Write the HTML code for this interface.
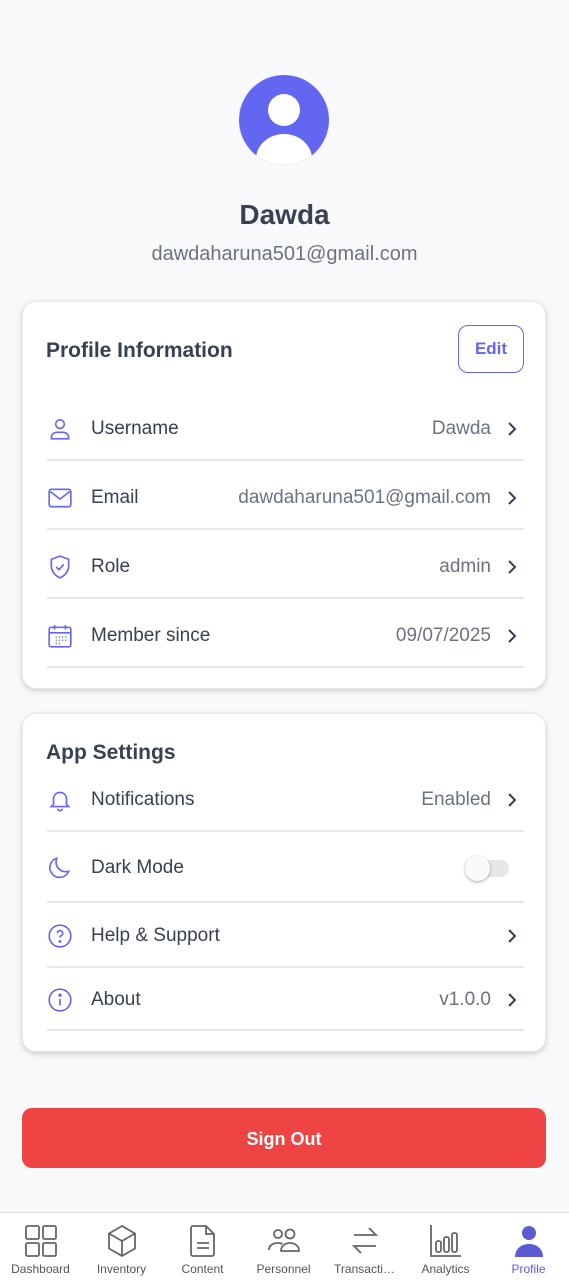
<!DOCTYPE html>
<html><head><meta charset="utf-8"><style>
*{box-sizing:border-box;margin:0;padding:0}
body{width:569px;height:1280px;background:#f8f9fb;font-family:"Liberation Sans",Roboto,sans-serif;position:relative;overflow:hidden;color:#374151}
.abs{position:absolute}
.card{position:absolute;left:22px;width:524px;background:#fff;border-radius:14px;box-shadow:0 2px 6px rgba(0,0,0,.18);border:1px solid #e5e7eb}
.row{position:absolute;left:24px;width:477px;display:flex;align-items:center;font-size:19px;color:#374151}
.row svg.ic{width:26px;height:26px;margin-right:18px}
.row .v{margin-left:auto;color:#6b7280;font-size:19px}
.chev{width:14px;height:14px;margin-left:14px;margin-right:5px}
.div{position:absolute;left:24px;width:477px;height:2px;background:#e5e7eb}
.nav{position:absolute;left:0;top:1212px;width:569px;height:68px;background:#fff;border-top:1px solid #ddd}
.ni{position:absolute;top:0;width:81px;text-align:center;font-size:12px;color:#555}
.ni svg{display:block;margin:11px auto 4px;width:34px;height:34px}
</style></head><body>
<div class="abs" style="left:239px;top:75px;width:90px;height:90px;border-radius:50%;background:#6366f1;overflow:hidden">
<div class="abs" style="left:29px;top:19px;width:32px;height:32px;border-radius:50%;background:#fff"></div>
<div class="abs" style="left:17px;top:59px;width:56px;height:50px;border-radius:50%;background:#fff"></div>
</div>
<div class="abs" style="left:0;width:569px;top:199px;text-align:center;font-size:28px;font-weight:bold;color:#374151">Dawda</div>
<div class="abs" style="left:0;width:569px;top:243px;text-align:center;font-size:20px;color:#6b7280">dawdaharuna501@gmail.com</div>

<div class="card" style="top:301px;height:388px">
<div class="abs" style="left:23px;top:37px;font-size:21px;font-weight:bold;color:#374151">Profile Information</div>
<div class="abs" style="left:435px;top:23px;width:66px;height:48px;border:1.5px solid #6366f1;border-radius:10px;color:#6366f1;font-weight:bold;font-size:17px;text-align:center;line-height:46px">Edit</div>
<div class="row" style="top:114px">
<svg class="ic" viewBox="0 0 24 24" fill="none" stroke="#6366f1" stroke-width="1.5"><circle cx="12" cy="7.5" r="4"/><path d="M4 21v-1a5 5 0 0 1 5-5h6a5 5 0 0 1 5 5v1z"/></svg>Username<span class="v">Dawda</span><svg class="chev" viewBox="0 0 14 14" fill="none" stroke="#374151" stroke-width="2"><path d="M4 1l6 6-6 6"/></svg></div>
<div class="div" style="top:157px"></div>
<div class="row" style="top:183px">
<svg class="ic" viewBox="0 0 24 24" fill="none" stroke="#6366f1" stroke-width="1.5"><rect x="2" y="4" width="20" height="16" rx="2"/><path d="M3 6l9 7 9-7"/></svg>Email<span class="v">dawdaharuna501@gmail.com</span><svg class="chev" viewBox="0 0 14 14" fill="none" stroke="#374151" stroke-width="2"><path d="M4 1l6 6-6 6"/></svg></div>
<div class="div" style="top:226px"></div>
<div class="row" style="top:252px">
<svg class="ic" viewBox="0 0 24 24" fill="none" stroke="#6366f1" stroke-width="1.5"><path d="M12 2l8 3v6c0 5-3.5 9-8 11-4.5-2-8-6-8-11V5z"/><path d="M8.5 12l2.5 2.5 4.5-5"/></svg>Role<span class="v">admin</span><svg class="chev" viewBox="0 0 14 14" fill="none" stroke="#374151" stroke-width="2"><path d="M4 1l6 6-6 6"/></svg></div>
<div class="div" style="top:295px"></div>
<div class="row" style="top:321px">
<svg class="ic" viewBox="0 0 24 24" fill="none" stroke="#6366f1" stroke-width="1.5"><rect x="2" y="4" width="20" height="18" rx="2"/><path d="M2 9h20M7 2v4M17 2v4"/><path d="M8 13h1M11 13h1M14 13h1M17 13h1M8 16h1M11 16h1M14 16h1M17 16h1M8 19h1M11 19h1" stroke-width="1.5"/></svg>Member since<span class="v">09/07/2025</span><svg class="chev" viewBox="0 0 14 14" fill="none" stroke="#374151" stroke-width="2"><path d="M4 1l6 6-6 6"/></svg></div>
<div class="div" style="top:364px"></div>
</div>

<div class="card" style="top:713px;height:339px">
<div class="abs" style="left:23px;top:27px;font-size:21px;font-weight:bold;color:#374151">App Settings</div>
<div class="row" style="top:73px">
<svg class="ic" viewBox="0 0 24 24" fill="none" stroke="#6366f1" stroke-width="1.5"><path d="M6 16V11a6 6 0 0 1 12 0v5l2 2H4z"/><path d="M10 20a2 2 0 0 0 4 0"/></svg>Notifications<span class="v">Enabled</span><svg class="chev" viewBox="0 0 14 14" fill="none" stroke="#374151" stroke-width="2"><path d="M4 1l6 6-6 6"/></svg></div>
<div class="div" style="top:116px"></div>
<div class="row" style="top:141px">
<svg class="ic" viewBox="0 0 24 24" fill="none" stroke="#6366f1" stroke-width="1.5"><path d="M20 15A9 9 0 0 1 9 3a9 9 0 1 0 11 12z"/></svg>Dark Mode
<div style="margin-left:auto;position:relative;width:44px;height:22px;margin-right:15px"><div style="position:absolute;left:4px;top:3px;width:40px;height:17px;border-radius:9px;background:#e5e7eb"></div><div style="position:absolute;left:0;top:-1px;width:25px;height:25px;border-radius:50%;background:#fafafa;box-shadow:0 1px 3px rgba(0,0,0,.35)"></div></div></div>
<div class="div" style="top:187px"></div>
<div class="row" style="top:209px">
<svg class="ic" viewBox="0 0 24 24" fill="none" stroke="#6366f1" stroke-width="1.5"><circle cx="12" cy="12" r="10"/><path d="M9.5 9.5a2.5 2.5 0 1 1 3.5 2.3c-.7.3-1 .9-1 1.7"/><circle cx="12" cy="17" r=".6" fill="#6366f1"/></svg>Help &amp; Support<span class="v"></span><svg class="chev" viewBox="0 0 14 14" fill="none" stroke="#374151" stroke-width="2"><path d="M4 1l6 6-6 6"/></svg></div>
<div class="div" style="top:252px"></div>
<div class="row" style="top:273px">
<svg class="ic" viewBox="0 0 24 24" fill="none" stroke="#6366f1" stroke-width="1.5"><circle cx="12" cy="12" r="10"/><path d="M12 11v6"/><circle cx="12" cy="7.5" r=".8" fill="#6366f1"/></svg>About<span class="v">v1.0.0</span><svg class="chev" viewBox="0 0 14 14" fill="none" stroke="#374151" stroke-width="2"><path d="M4 1l6 6-6 6"/></svg></div>
<div class="div" style="top:315px"></div>
</div>

<div class="abs" style="left:22px;top:1108px;width:524px;height:60px;border-radius:10px;background:#ef4444;color:#fff;font-weight:bold;font-size:18px;text-align:center;line-height:62px">Sign Out</div>

<div class="nav">
<div class="ni" style="left:0"><svg viewBox="0 0 34 34" fill="none" stroke="#666" stroke-width="1.8"><rect x="2" y="2" width="13" height="13" rx="1.5"/><rect x="19" y="2" width="13" height="13" rx="1.5"/><rect x="2" y="19" width="13" height="13" rx="1.5"/><rect x="19" y="19" width="13" height="13" rx="1.5"/></svg>Dashboard</div>
<div class="ni" style="left:81px"><svg viewBox="0 0 34 34" fill="none" stroke="#666" stroke-width="1.8"><path d="M17 2l13 7.5v15L17 32 4 24.5v-15z"/><path d="M4 9.5l13 7.5 13-7.5M17 17v15"/></svg>Inventory</div>
<div class="ni" style="left:162px"><svg viewBox="0 0 34 34" fill="none" stroke="#666" stroke-width="1.8"><path d="M7 2h13l8 8v20a2 2 0 0 1-2 2H7a2 2 0 0 1-2-2V4a2 2 0 0 1 2-2z"/><path d="M20 2v8h8M11 19h12M11 24h12"/></svg>Content</div>
<div class="ni" style="left:243px"><svg viewBox="0 0 34 34" fill="none" stroke="#666" stroke-width="1.8"><circle cx="11" cy="10" r="4"/><circle cx="23" cy="10" r="4.5"/><path d="M2 26c0-4 3-7 9-7 2 0 3.5.3 4.5 1M14 27c0-5 4-8 9-8s9 3 9 8z"/></svg>Personnel</div>
<div class="ni" style="left:324px"><svg viewBox="0 0 34 34" fill="none" stroke="#666" stroke-width="1.8"><path d="M6 11h22l-7-7M28 22H6l7 7"/></svg>Transacti…</div>
<div class="ni" style="left:405px"><svg viewBox="0 0 34 34" fill="none" stroke="#666" stroke-width="1.8"><path d="M2 1v31h30"/><rect x="7" y="17" width="5" height="11" rx="2"/><rect x="15" y="13" width="5" height="15" rx="2"/><rect x="23" y="9" width="5" height="19" rx="2"/></svg>Analytics</div>
<div class="ni" style="left:488px;color:#5b5bd6"><svg viewBox="0 0 34 34" fill="#5b5bd6"><circle cx="17" cy="9" r="7"/><path d="M3 33c0-8 6-13 14-13s14 5 14 13z"/></svg>Profile</div>
</div>
</body></html>
